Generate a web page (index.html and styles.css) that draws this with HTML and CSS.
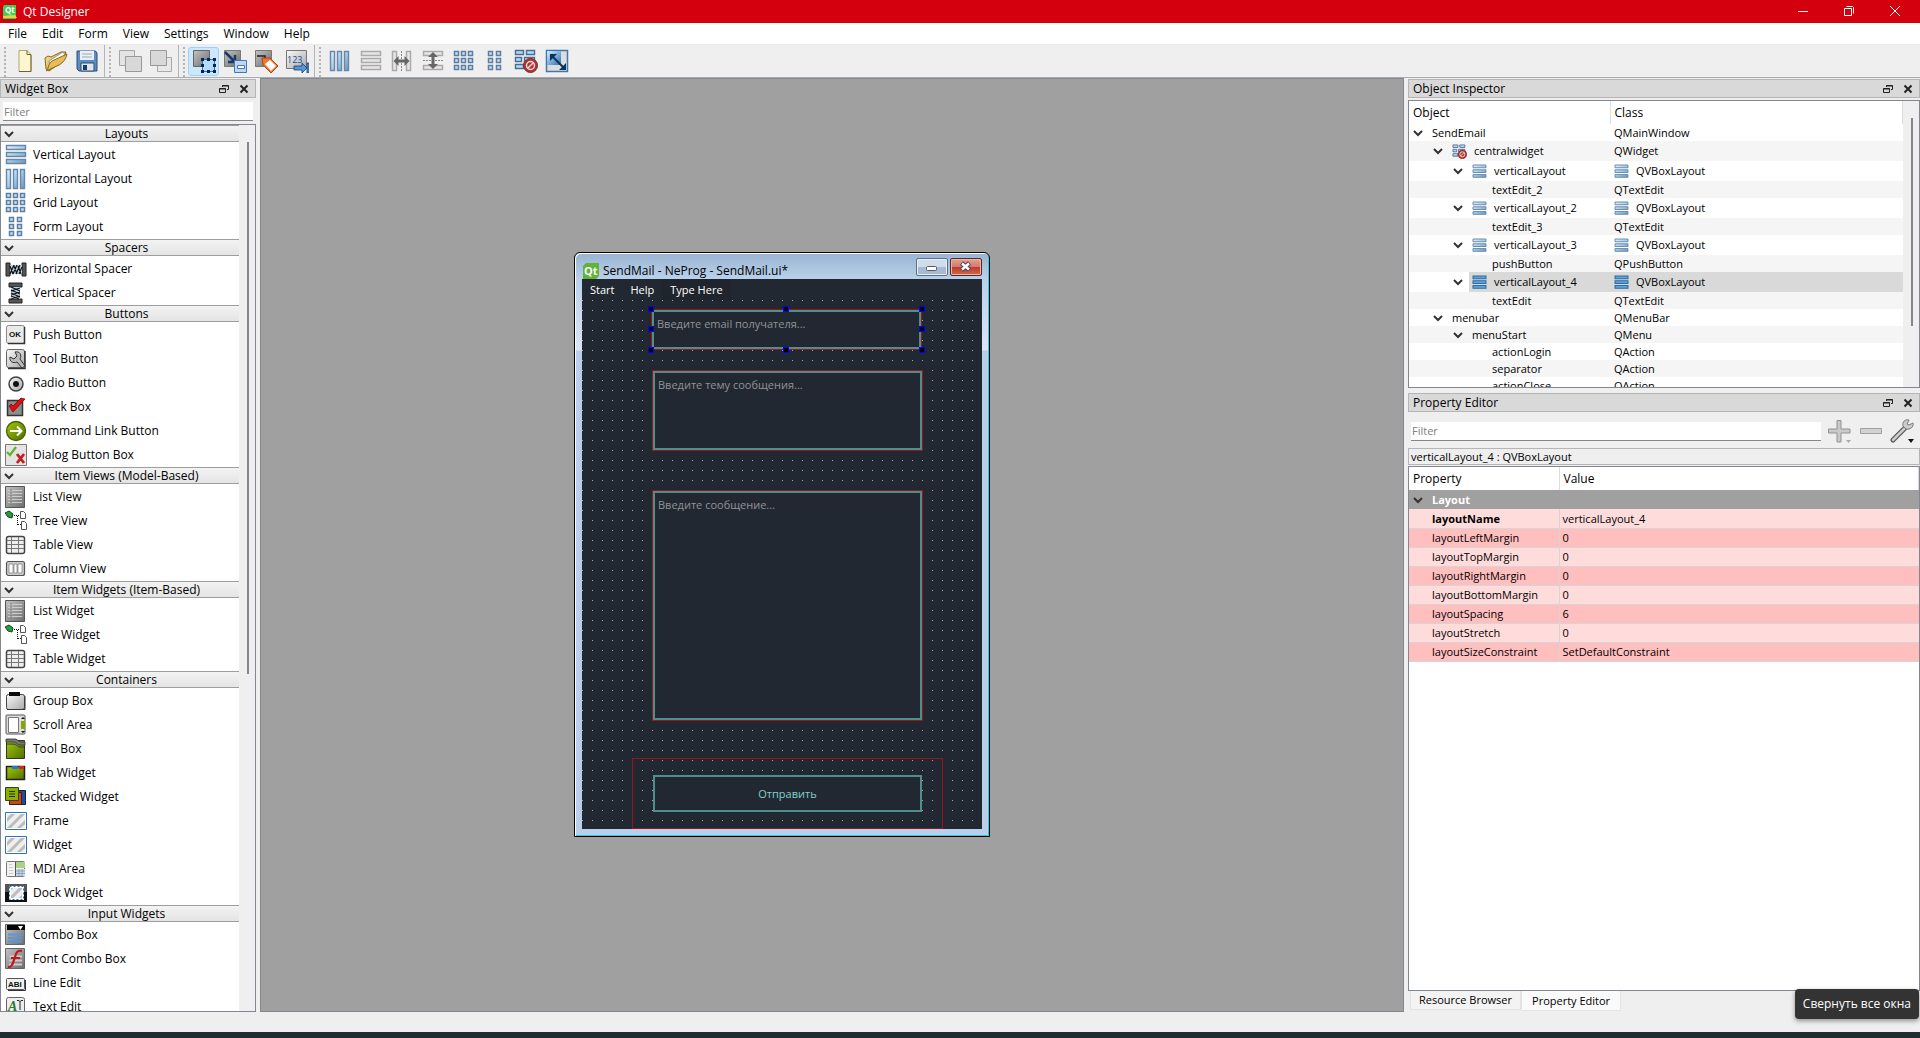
FILE: index.html
```html
<!DOCTYPE html>
<html lang="en">
<head>
<meta charset="utf-8">
<title>Qt Designer</title>
<link rel="stylesheet" href="styles.css">
</head>
<body>
<svg class="sprite" aria-hidden="true">
  <defs>
    <linearGradient id="blue" x1="0" y1="0" x2="1" y2="1"><stop offset="0" stop-color="#dff2ff"/><stop offset=".5" stop-color="#9fcdec"/><stop offset="1" stop-color="#6f96b8"/></linearGradient>
    <linearGradient id="grey" x1="0" y1="0" x2="1" y2="1"><stop offset="0" stop-color="#fafafa"/><stop offset="1" stop-color="#a8a8a8"/></linearGradient>
    <linearGradient id="dark" x1="0" y1="0" x2="1" y2="1"><stop offset="0" stop-color="#c4c4c4"/><stop offset="1" stop-color="#6c6c6c"/></linearGradient>
    <linearGradient id="green" x1="0" y1="0" x2="1" y2="1"><stop offset="0" stop-color="#a5c800"/><stop offset="1" stop-color="#4f6e00"/></linearGradient>
    <linearGradient id="gold" x1="0" y1="0" x2="1" y2="1"><stop offset="0" stop-color="#fbe9a4"/><stop offset="1" stop-color="#c69322"/></linearGradient>
    <linearGradient id="navy" x1="0" y1="0" x2="1" y2="1"><stop offset="0" stop-color="#d6ecff"/><stop offset="1" stop-color="#2c6fb4"/></linearGradient>
    <pattern id="stripes" width="7" height="7" patternUnits="userSpaceOnUse" patternTransform="rotate(45)"><rect width="7" height="7" fill="#efefef"/><rect width="3" height="7" fill="#bcbcbc"/></pattern>
  </defs>
  <symbol id="i-chev" viewBox="0 0 10 8"><path d="M1 2l4 4 4-4" fill="none" stroke="#333" stroke-width="2"/></symbol>
  <symbol id="i-float" viewBox="0 0 10 10"><path d="M3.500 3V1.500h6v4H8M3 2h7M.5 4.500h6v4h-6zM0 5h7" fill="none" stroke="#222"/></symbol>
  <symbol id="i-x" viewBox="0 0 10 10"><path d="M1.500 1.500l7 7M8.500 1.500l-7 7" fill="none" stroke="#222" stroke-width="2"/></symbol>
  <symbol id="i-new" viewBox="0 0 24 24"><path d="M6 1.500h8l4 4v17H6z" fill="#fdf7cf" stroke="#b3a86a"/><path d="M14 1.500v4h4M18 6v16.500H6" fill="none" stroke="#6e6535"/></symbol>
  <symbol id="i-open" viewBox="0 0 24 24"><path d="M1 9l3-2 3 1 10-5 5 0-4 10-13 9-3-2z" fill="url(#gold)" stroke="#8a6a1c"/><path d="M5 12L19 3l2 3L6 18z" fill="#fff" stroke="#777" stroke-width=".7"/><path d="M2 22c3-2 2-8 6-10L23 5c-1 5-4 9-8 11z" fill="#e9bd55" stroke="#8a6a1c"/></symbol>
  <symbol id="i-save" viewBox="0 0 24 24"><path d="M2 2h18.500L22 4v18H4l-2-2V2z" fill="#5b8dc4" stroke="#2b4f7a"/><path d="M5 2h14v9H5z" fill="#e8f1fa"/><path d="M7 5h10M7 8h10" stroke="#9ab"/><path d="M6 14h13v8H6z" fill="#dfe5ea" stroke="#294c70"/><path d="M8 16h4v5H8z" fill="#1d3b5f"/></symbol>
  <symbol id="i-front" viewBox="0 0 24 24"><path d="M1.500 1.500h15v15h-15z" fill="#e3e3e3" stroke="#a5a5a5"/><path d="M7.500 7.500h16v15h-16z" fill="#d8d8d8" stroke="#999"/></symbol>
  <symbol id="i-back" viewBox="0 0 24 24"><path d="M8.500 8.500h14v14h-14z" fill="#e8e8e8" stroke="#aaa"/><path d="M1.500 1.500h16v15h-16z" fill="#d8d8d8" stroke="#999"/></symbol>
  <symbol id="i-wedit" viewBox="0 0 24 24"><path d="M1.500 1.500h16v16h-16z" fill="url(#dark)" stroke="#666"/><path d="M10.500 10.500h12v12h-12z" fill="#b2dcff" stroke="#336fb9"/><path d="M9 9h3v3H9zM15 9h3v3h-3zM21 9h3v3h-3zM9 15h3v3H9zM21 15h3v3h-3zM9 21h3v3H9zM15 21h3v3h-3zM21 21h3v3h-3z" fill="#0d2348"/></symbol>
  <symbol id="i-sig" viewBox="0 0 24 24"><path d="M1.500 1.500h16v16h-16z" fill="url(#dark)" stroke="#777"/><path d="M2 3l9 9M12 6v7H5" fill="none" stroke="#153b66" stroke-width="2.500"/><path d="M11.500 11.500h12v12h-12z" fill="#bcd8f4" stroke="#4478b3"/><path d="M14.500 16.500h7v3h-7z" fill="#fff" stroke="#4478b3"/></symbol>
  <symbol id="i-buddy" viewBox="0 0 24 24"><path d="M1.500 1.500h16v16h-16z" fill="url(#dark)" stroke="#777"/><path d="M3 7h8v5" fill="none" stroke="#222" stroke-width="1.500"/><path d="M8 9h8l8 8-7 7-8-8z" fill="#f0752a" stroke="#b34510"/><path d="M11 15l5-4 6 6-5 5z" fill="#fff"/></symbol>
  <symbol id="i-h" viewBox="0 0 22 22"><path d="M1.500 1.500h4v19h-4zM8.500 1.500h4v19h-4zM15.500 1.500h4v19h-4z" fill="url(#blue)" stroke="#6a86a6" stroke-width="1.400"/></symbol>
  <symbol id="i-v" viewBox="0 0 22 22"><path d="M1.500 1.500h19v4h-19zM1.500 8.500h19v4h-19zM1.500 15.500h19v4h-19z" fill="url(#blue)" stroke="#6a86a6" stroke-width="1.400"/></symbol>
  <symbol id="i-vsel" viewBox="0 0 22 22"><path d="M1.500 1.500h19v4h-19zM1.500 8.500h19v4h-19zM1.500 15.500h19v4h-19z" fill="#56a7de" stroke="#33699c" stroke-width="1.500"/></symbol>
  <symbol id="i-voff" viewBox="0 0 22 22"><path d="M1.500 1.500h19v4h-19zM1.500 8.500h19v4h-19zM1.500 15.500h19v4h-19z" fill="#e6e6e6" stroke="#aaa" stroke-width="1.500"/></symbol>
  <symbol id="i-hs" viewBox="0 0 22 22"><path d="M1.500 1.500h4v19h-4zM15.500 1.500h4v19h-4z" fill="#e6e6e6" stroke="#aaa" stroke-width="1.500"/><path d="M10.500 1v20" stroke="#888" stroke-dasharray="2 1"/><path d="M2.500 11l5-5v3.500h6V6l5 5-5 5v-3.500h-6V16z" fill="#666"/></symbol>
  <symbol id="i-vs" viewBox="0 0 22 22"><path d="M1.500 1.500h19v4h-19zM1.500 15.500h19v4h-19z" fill="#e6e6e6" stroke="#aaa" stroke-width="1.500"/><path d="M1 10.500h20" stroke="#888" stroke-dasharray="2 1"/><path d="M11 2l5 5h-3.500v7H16l-5 5-5-5h3.500V7H6z" fill="#666"/></symbol>
  <symbol id="i-grid" viewBox="0 0 22 22"><path d="M1.500 1.500h4v4h-4zM8.500 1.500h4v4h-4zM15.500 1.500h4v4h-4zM1.500 8.500h4v4h-4zM8.500 8.500h4v4h-4zM15.500 8.500h4v4h-4zM1.500 15.500h4v4h-4zM8.500 15.500h4v4h-4zM15.500 15.500h4v4h-4z" fill="#c3e2f6" stroke="#5e7da0" stroke-width="1.500"/></symbol>
  <symbol id="i-form" viewBox="0 0 22 22"><path d="M4.500 1.500h4v4h-4zM12.500 1.500h4v4h-4zM4.500 8.500h4v4h-4zM12.500 8.500h4v4h-4zM4.500 15.500h4v4h-4zM12.500 15.500h4v4h-4z" fill="#c3e2f6" stroke="#5e7da0" stroke-width="1.500"/></symbol>
  <symbol id="i-break" viewBox="0 0 24 24"><path d="M1.500 1.500h8v4h-8zM12.500 1.500h8v4h-8zM1.500 8.500h6v4h-6zM10.500 8.500h10v4h-10zM1.500 15.500h8v4h-8z" fill="#b5dbf5" stroke="#4b6c92" stroke-width="1.400"/><circle cx="16.500" cy="16.500" r="7" fill="#b92f2f" stroke="#7c2a2a"/><circle cx="16.500" cy="16.500" r="4" fill="#b92f2f" stroke="#ddd" stroke-width="1.500"/><path d="M13.700 19.300l5.600-5.600" stroke="#ddd" stroke-width="1.500"/></symbol>
  <symbol id="i-adjust" viewBox="0 0 24 24"><path d="M1.500 1.500h21v21h-21z" fill="#ddd" stroke="#3a78b5" stroke-width="1.500"/><path d="M2 2h14v14H2z" fill="url(#navy)"/><path d="M7 7l12 12" stroke="#0d3557" stroke-width="2"/><path d="M5 5h7l-7 7zM21 21h-7l7-7z" fill="#0d3557"/></symbol>
  <symbol id="i-hspc" viewBox="0 0 22 22"><path d="M1 5h4v13H1zM17 5h4v13h-4z" fill="#555" stroke="#222"/><path d="M5 7h12v9H5z" fill="#bcd3e4"/><path d="M5 16l4-9M8 16l4-9M11 16l4-9M14 16l3-7M5 8l3 8M9 8l3 8M13 8l3 8" stroke="#111" stroke-width="1.200"/></symbol>
  <symbol id="i-vspc" viewBox="0 0 22 22"><path d="M4 1h13v4H4zM4 17h13v4H4z" fill="#555" stroke="#222"/><path d="M6 5h9v12H6z" fill="#bcd3e4"/><path d="M6 5l9 4M6 8l9 4M6 11l9 4M6 14l8 3M15 6l-9 3M15 10l-9 3M15 14l-9 3" stroke="#111" stroke-width="1.200"/></symbol>
  <symbol id="i-tool" viewBox="0 0 22 22"><rect x="1.500" y="1.500" width="18" height="18" rx="2" fill="url(#grey)" stroke="#666"/><path d="M3 20.500h17V3" fill="none" stroke="#333" stroke-width="1.500"/><path d="M10 4c5-1 7 3 5 7l5 7-3 2-5-6c-4 2-8-1-7-5l4 2 3-3z" fill="#bbb" stroke="#333"/></symbol>
  <symbol id="i-radio" viewBox="0 0 22 22"><circle cx="11" cy="12" r="7" fill="url(#grey)" stroke="#444" stroke-width="1.500"/><circle cx="11" cy="12" r="3" fill="#111"/></symbol>
  <symbol id="i-check" viewBox="0 0 22 22"><path d="M2.500 4.500h15v15h-15z" fill="#8d8d8d" stroke="#333" stroke-width="1.500"/><path d="M4 10l4 6L20 3l-4-1-8 8-2-2z" fill="#d11" stroke="#700" stroke-width=".7"/></symbol>
  <symbol id="i-cmd" viewBox="0 0 22 22"><circle cx="11" cy="11" r="9.500" fill="url(#green)" stroke="#46600a" stroke-width="1.300"/><path d="M5 11h11M12 6.500l4.500 4.500-4.500 4.500" fill="none" stroke="#fff" stroke-width="2"/></symbol>
  <symbol id="i-dlg" viewBox="0 0 22 22"><path d="M.5.5h21v21H.5z" fill="#e4e4e4" stroke="#777"/><path d="M2 8l3 3 6-8" fill="none" stroke="#5eb52c" stroke-width="2.200"/><path d="M12 10l7 9M19 10l-7 9" stroke="#c41e1e" stroke-width="2.800"/></symbol>
  <symbol id="i-list" viewBox="0 0 22 22"><path d="M.5.5h19v21H.5z" fill="url(#dark)" stroke="#555"/><path d="M3 4.500h14M3 7.500h14M3 10.500h14M3 13.500h14M3 16.500h14" stroke="#ccc"/><path d="M6 3v16" stroke="#777" stroke-dasharray="2 1"/></symbol>
  <symbol id="i-tree" viewBox="0 0 22 22"><path d="M0 3l4-2 4 3-1 4-4-1z" fill="#2a9a3c" stroke="#0c4a18"/><path d="M9 5.500h6M12.500 6v9M13 14.500h3" fill="none" stroke="#111" stroke-dasharray="1 1"/><path d="M15.500 1.500h3l2 2v5h-5zM16.500 11.500h3l2 2v6h-5z" fill="#fff" stroke="#555"/></symbol>
  <symbol id="i-table" viewBox="0 0 22 22"><rect x="1.500" y="2.500" width="18" height="17" rx="2" fill="#eee" stroke="#444" stroke-width="1.500"/><path d="M2 6.500h17M2 10.500h17M2 14.500h17M6.500 3v16M13.500 3v16" stroke="#777"/></symbol>
  <symbol id="i-col" viewBox="0 0 22 22"><rect x="1.500" y="3.500" width="18" height="14" rx="2" fill="#ccc" stroke="#555" stroke-width="1.200"/><path d="M4 6h4v9H4zM9 6h3v9H9zM13 6h4v9h-4z" fill="#fff" stroke="#777" stroke-width=".7"/></symbol>
  <symbol id="i-group" viewBox="0 0 22 22"><rect x="1.500" y="4.500" width="18" height="15" rx="2" fill="url(#grey)" stroke="#444"/><path d="M2 19.500h18V6" fill="none" stroke="#333"/><path d="M4 2h11v4H4z" fill="#0a0a0a"/></symbol>
  <symbol id="i-scroll" viewBox="0 0 22 22"><rect x="1" y="1" width="19" height="19" rx="1" fill="#ddd" stroke="#555"/><path d="M3.500 3.500h10v15h-10z" fill="#fff" stroke="#777"/><path d="M16 7h4v8h-4z" fill="#84a800"/><path d="M16 5l2-2 2 2zM16 17l2 2 2-2z" fill="#111"/></symbol>
  <symbol id="i-toolbox" viewBox="0 0 22 22"><path d="M1.500 2.500h18v18h-18z" fill="url(#green)" stroke="#333"/><path d="M1 1h10l4 3h5v3h-6l-4-3H1zM1 6h9l4 3h6" fill="#777" stroke="#333" stroke-width=".8"/></symbol>
  <symbol id="i-tabw" viewBox="0 0 22 22"><path d="M1.500 4.500h18v13h-18z" fill="url(#green)" stroke="#222" stroke-width="1.500"/><path d="M7 4h6v3H7z" fill="#2677cc"/><path d="M14 4h5v3h-5z" fill="#d22"/></symbol>
  <symbol id="i-stack" viewBox="0 0 22 22"><path d="M10.500 4.500h10v14h-10z" fill="#1c4da3" stroke="#123"/><path d="M4.500 6.500h12v12h-12z" fill="#c64a14" stroke="#511"/><path d="M.5 1.500h13v13H.5z" fill="#8bb000" stroke="#341"/><path d="M4 5.500h6M4 8h6M4 10.500h6" stroke="#231"/></symbol>
  <symbol id="i-frame" viewBox="0 0 22 22"><path d="M.5 2.500h21v17H.5z" fill="#fff" stroke="#2c73be"/><path d="M2 4h18v14H2z" fill="url(#stripes)"/></symbol>
  <symbol id="i-mdi" viewBox="0 0 22 22"><rect x="1.500" y="3.500" width="18" height="15" rx="1" fill="#f2f2f2" stroke="#777"/><path d="M11 4h9v6h-9z" fill="#a9d382"/><path d="M11 11h9v7h-9z" fill="#c9daf0"/><path d="M4 6.500h3M4 9.500h4M4 12.500h4M4 15.500h4" stroke="#ccc"/><path d="M11 13h9M11 15.500h9M14 11v7M17 11v7" stroke="#8ea5bd"/><path d="M10.500 4v14" stroke="#555"/></symbol>
  <symbol id="i-dock" viewBox="0 0 22 22"><path d="M0 2h22v18H0z" fill="#555"/><path d="M0 10h22v10H0z" fill="#111"/><path d="M5 5h13v12H5z" fill="url(#stripes)" stroke="#fff" stroke-width="2"/><path d="M4.500 4.500h14v13h-14z" fill="none" stroke="#2c73be" stroke-dasharray="2 2"/></symbol>
  <symbol id="i-combo" viewBox="0 0 22 22"><path d="M.5.500h19v20H.5z" fill="url(#dark)" stroke="#666"/><path d="M2 1h18v5H2z" fill="#050505"/><path d="M13 2h5l-2.500 4z" fill="#fff"/><path d="M3 10.500h14M3 14h14M3 17.500h14" stroke="#5b96d8" stroke-width="2"/></symbol>
  <symbol id="i-fcombo" viewBox="0 0 22 22"><path d="M.5.500h19v20H.5z" fill="url(#dark)" stroke="#666"/><path d="M4 8.500h13M4 12.500h13M4 16.500h13" stroke="#ccc" stroke-width="2"/><path d="M3 19c4 1 5-4 7-10 1-5 3-7 7-6M6 10h9" fill="none" stroke="#c01818" stroke-width="2.200"/></symbol>
  <symbol id="i-plus" viewBox="0 0 24 24"><path d="M9 1.500h4V10h9v4h-9v9H9v-9H.5v-4H9z" fill="#c9c9c9" stroke="#909090"/><path d="M18 21h5l-2.500 3z" fill="#aaa"/></symbol>
  <symbol id="i-minus" viewBox="0 0 24 24"><path d="M1.500 9.500h21v5h-21z" fill="#d2d2d2" stroke="#a0a0a0"/></symbol>
  <symbol id="i-wrench" viewBox="0 0 24 24"><path d="M3 21L15 9" stroke="#555" stroke-width="5" stroke-linecap="round"/><path d="M3 21L15 9" stroke="#ccc" stroke-width="2.500" stroke-linecap="round"/><path d="M13 7c-1-4 2-7 6-6l-2 4 2 1 4-2c1 4-3 7-7 6z" fill="#ccc" stroke="#777"/><path d="M18 20h6l-3 4z" fill="#111"/></symbol>
</svg>

<div class="app">
  <header class="titlebar">
    <svg class="app-icon" viewBox="0 0 16 16" aria-hidden="true"><path d="M2 1h12v14H1V3z" fill="#41cd52"/><text x="3" y="9" class="ico-qt">Qt</text><path d="M1 12l12-1 2 3H1z" fill="#e8d640"/></svg>
    <h1 class="title">Qt Designer</h1>
    <div class="win-controls">
      <button class="win-btn" aria-label="Minimize"><svg viewBox="0 0 10 10"><path d="M0 5.500h10"/></svg></button>
      <button class="win-btn" aria-label="Restore"><svg viewBox="0 0 10 10"><path d="M.5 2.500h7v7h-7zM2.500.5h6l1 1v6"/></svg></button>
      <button class="win-btn" aria-label="Close"><svg viewBox="0 0 10 10"><path d="M0 0l10 10M10 0L0 10"/></svg></button>
    </div>
  </header>

  <nav class="menubar">
    <button>File</button><button>Edit</button><button>Form</button><button>View</button><button>Settings</button><button>Window</button><button>Help</button>
  </nav>

  <div class="toolbars">
    <div class="toolbar">
      <button aria-label="New"><svg><use href="#i-new"/></svg></button>
      <button aria-label="Open"><svg><use href="#i-open"/></svg></button>
      <button aria-label="Save"><svg><use href="#i-save"/></svg></button>
    </div>
    <div class="toolbar">
      <button aria-label="Bring to front"><svg><use href="#i-front"/></svg></button>
      <button aria-label="Send to back"><svg><use href="#i-back"/></svg></button>
    </div>
    <div class="toolbar">
      <button class="on" aria-label="Edit widgets"><svg><use href="#i-wedit"/></svg></button>
      <button aria-label="Edit signals"><svg><use href="#i-sig"/></svg></button>
      <button aria-label="Edit buddies"><svg><use href="#i-buddy"/></svg></button>
      <button aria-label="Edit tab order"><svg viewBox="0 0 24 24"><path d="M1.500 1.500h20v18h-20z" fill="url(#grey)" stroke="#777"/><text x="2" y="14" class="ico-num">123</text><path d="M9 17h8v-3l5 5-5 5v-3H9zM22 14h2v10h-2z" fill="#5b95d6" stroke="#15406f" stroke-width=".8"/></svg></button>
    </div>
    <div class="toolbar">
      <button aria-label="Lay out horizontally"><svg class="sm"><use href="#i-h"/></svg></button>
      <button aria-label="Lay out vertically"><svg class="sm"><use href="#i-voff"/></svg></button>
      <button aria-label="Horizontal splitter"><svg class="sm"><use href="#i-hs"/></svg></button>
      <button aria-label="Vertical splitter"><svg class="sm"><use href="#i-vs"/></svg></button>
      <button aria-label="Grid"><svg class="sm"><use href="#i-grid"/></svg></button>
      <button aria-label="Form"><svg class="sm"><use href="#i-form"/></svg></button>
      <button aria-label="Break layout"><svg><use href="#i-break"/></svg></button>
      <button aria-label="Adjust size"><svg><use href="#i-adjust"/></svg></button>
    </div>
  </div>

  <main class="main">
    <section class="dock widget-box">
      <div class="dock-title"><h2>Widget Box</h2><button aria-label="Float"><svg><use href="#i-float"/></svg></button><button aria-label="Close"><svg><use href="#i-x"/></svg></button></div>
      <input class="filter" type="text" placeholder="Filter" aria-label="Filter widgets">
      <div class="box">
        <div class="groups">
          <button class="group"><svg><use href="#i-chev"/></svg>Layouts</button>
          <ul>
            <li><svg><use href="#i-v"/></svg>Vertical Layout</li>
            <li><svg><use href="#i-h"/></svg>Horizontal Layout</li>
            <li><svg><use href="#i-grid"/></svg>Grid Layout</li>
            <li><svg><use href="#i-form"/></svg>Form Layout</li>
          </ul>
          <button class="group"><svg><use href="#i-chev"/></svg>Spacers</button>
          <ul>
            <li><svg><use href="#i-hspc"/></svg>Horizontal Spacer</li>
            <li><svg><use href="#i-vspc"/></svg>Vertical Spacer</li>
          </ul>
          <button class="group"><svg><use href="#i-chev"/></svg>Buttons</button>
          <ul>
            <li><svg viewBox="0 0 22 22"><rect x="1.500" y="1.500" width="18" height="18" rx="2" fill="#eaeaea" stroke="#888"/><path d="M3 19.500h16.500V3" fill="none" stroke="#333" stroke-width="1.500"/><text x="4" y="13" class="ico-ok">OK</text></svg>Push Button</li>
            <li><svg><use href="#i-tool"/></svg>Tool Button</li>
            <li><svg><use href="#i-radio"/></svg>Radio Button</li>
            <li><svg><use href="#i-check"/></svg>Check Box</li>
            <li><svg><use href="#i-cmd"/></svg>Command Link Button</li>
            <li><svg><use href="#i-dlg"/></svg>Dialog Button Box</li>
          </ul>
          <button class="group"><svg><use href="#i-chev"/></svg>Item Views (Model-Based)</button>
          <ul>
            <li><svg><use href="#i-list"/></svg>List View</li>
            <li><svg><use href="#i-tree"/></svg>Tree View</li>
            <li><svg><use href="#i-table"/></svg>Table View</li>
            <li><svg><use href="#i-col"/></svg>Column View</li>
          </ul>
          <button class="group"><svg><use href="#i-chev"/></svg>Item Widgets (Item-Based)</button>
          <ul>
            <li><svg><use href="#i-list"/></svg>List Widget</li>
            <li><svg><use href="#i-tree"/></svg>Tree Widget</li>
            <li><svg><use href="#i-table"/></svg>Table Widget</li>
          </ul>
          <button class="group"><svg><use href="#i-chev"/></svg>Containers</button>
          <ul>
            <li><svg><use href="#i-group"/></svg>Group Box</li>
            <li><svg><use href="#i-scroll"/></svg>Scroll Area</li>
            <li><svg><use href="#i-toolbox"/></svg>Tool Box</li>
            <li><svg><use href="#i-tabw"/></svg>Tab Widget</li>
            <li><svg><use href="#i-stack"/></svg>Stacked Widget</li>
            <li><svg><use href="#i-frame"/></svg>Frame</li>
            <li><svg><use href="#i-frame"/></svg>Widget</li>
            <li><svg><use href="#i-mdi"/></svg>MDI Area</li>
            <li><svg><use href="#i-dock"/></svg>Dock Widget</li>
          </ul>
          <button class="group"><svg><use href="#i-chev"/></svg>Input Widgets</button>
          <ul>
            <li><svg><use href="#i-combo"/></svg>Combo Box</li>
            <li><svg><use href="#i-fcombo"/></svg>Font Combo Box</li>
            <li><svg viewBox="0 0 22 22"><rect x="1.500" y="6.500" width="18" height="11" rx="1" fill="#eee" stroke="#555"/><path d="M3 18.500h17.500V8" fill="none" stroke="#333"/><text x="3" y="15" class="ico-ok">ABI</text></svg>Line Edit</li>
            <li><svg viewBox="0 0 22 22"><rect x="1.500" y="1.500" width="18" height="18" rx="2" fill="#ededed" stroke="#666"/><text x="3" y="15" class="ico-a">A</text><path d="M12 4.500h2l1 1 1-1h2M15 5v9" fill="none" stroke="#222"/></svg>Text Edit</li>
          </ul>
        </div>
        <div class="scroll"><div class="thumb thumb-widgets"></div></div>
      </div>
    </section>

    <section class="workspace" aria-label="Workspace">
      <div class="form-window">
        <div class="form-title">
          <svg class="form-icon" viewBox="0 0 16 16" aria-hidden="true"><path d="M3 0h13v13l-3 3H0V3z" fill="#5fb336"/><text x="1" y="12" class="ico-qt2">Qt</text></svg>
          <h2>SendMail - NeProg - SendMail.ui*</h2>
          <div class="form-controls">
            <button aria-label="Minimize form"><svg viewBox="0 0 30 16"><rect x="9.500" y="7.500" width="10" height="4" rx="1" fill="#fff" stroke="#555b66"/></svg></button>
            <button class="close" aria-label="Close form"><svg viewBox="0 0 30 16"><path d="M10.500 4l8 7M18.500 4l-8 7" stroke="#534050" stroke-width="4.500"/><path d="M11 4.500l7 6M18 4.500l-7 6" stroke="#fff" stroke-width="2.500"/></svg></button>
          </div>
        </div>
        <div class="form-client">
          <div class="form-menu"><button>Start</button><button>Help</button><button class="type-here">Type Here</button></div>
          <div class="form-canvas">
            <div class="lay lay-mail">
              <textarea placeholder="Введите email получателя..." aria-label="Email"></textarea>
              <i class="h nw"></i><i class="h n"></i><i class="h ne"></i><i class="h w"></i><i class="h e"></i><i class="h sw"></i><i class="h s"></i><i class="h se"></i>
            </div>
            <div class="lay lay-subject"><textarea placeholder="Введите тему сообщения..." aria-label="Subject"></textarea></div>
            <div class="lay lay-body"><textarea placeholder="Введите сообщение..." aria-label="Message"></textarea></div>
            <div class="lay lay-send"><button>Отправить</button></div>
          </div>
        </div>
      </div>
    </section>

    <div class="side">
      <section class="dock">
        <div class="dock-title"><h2>Object Inspector</h2><button aria-label="Float"><svg><use href="#i-float"/></svg></button><button aria-label="Close"><svg><use href="#i-x"/></svg></button></div>
        <div class="box inspector">
          <table class="tree">
            <colgroup><col class="c-object"><col></colgroup>
            <thead><tr><th>Object</th><th>Class</th></tr></thead>
            <tbody>
              <tr><td><span class="cell d0"><svg class="chev"><use href="#i-chev"/></svg>SendEmail</span></td><td>QMainWindow</td></tr>
              <tr class="tall"><td><span class="cell d1"><svg class="chev"><use href="#i-chev"/></svg><svg class="ic"><use href="#i-break"/></svg>centralwidget</span></td><td>QWidget</td></tr>
              <tr class="tall"><td><span class="cell d2"><svg class="chev"><use href="#i-chev"/></svg><svg class="ic"><use href="#i-v"/></svg>verticalLayout</span></td><td><span class="cell"><svg class="ic"><use href="#i-v"/></svg>QVBoxLayout</span></td></tr>
              <tr><td><span class="cell d3">textEdit_2</span></td><td>QTextEdit</td></tr>
              <tr class="tall"><td><span class="cell d2"><svg class="chev"><use href="#i-chev"/></svg><svg class="ic"><use href="#i-v"/></svg>verticalLayout_2</span></td><td><span class="cell"><svg class="ic"><use href="#i-v"/></svg>QVBoxLayout</span></td></tr>
              <tr><td><span class="cell d3">textEdit_3</span></td><td>QTextEdit</td></tr>
              <tr class="tall"><td><span class="cell d2"><svg class="chev"><use href="#i-chev"/></svg><svg class="ic"><use href="#i-v"/></svg>verticalLayout_3</span></td><td><span class="cell"><svg class="ic"><use href="#i-v"/></svg>QVBoxLayout</span></td></tr>
              <tr><td><span class="cell d3">pushButton</span></td><td>QPushButton</td></tr>
              <tr class="tall sel"><td><span class="cell d2"><svg class="chev"><use href="#i-chev"/></svg><svg class="ic"><use href="#i-vsel"/></svg>verticalLayout_4</span></td><td><span class="cell"><svg class="ic"><use href="#i-vsel"/></svg>QVBoxLayout</span></td></tr>
              <tr><td><span class="cell d3">textEdit</span></td><td>QTextEdit</td></tr>
              <tr><td><span class="cell d1"><svg class="chev"><use href="#i-chev"/></svg>menubar</span></td><td>QMenuBar</td></tr>
              <tr><td><span class="cell d2"><svg class="chev"><use href="#i-chev"/></svg>menuStart</span></td><td>QMenu</td></tr>
              <tr><td><span class="cell d3">actionLogin</span></td><td>QAction</td></tr>
              <tr><td><span class="cell d3">separator</span></td><td>QAction</td></tr>
              <tr><td><span class="cell d3">actionClose</span></td><td>QAction</td></tr>
            </tbody>
          </table>
          <div class="scroll"><div class="thumb thumb-objects"></div></div>
        </div>
      </section>

      <section class="dock properties">
        <div class="dock-title"><h2>Property Editor</h2><button aria-label="Float"><svg><use href="#i-float"/></svg></button><button aria-label="Close"><svg><use href="#i-x"/></svg></button></div>
        <div class="prop-tools">
          <input class="filter" type="text" placeholder="Filter" aria-label="Filter properties">
          <button aria-label="Add property"><svg><use href="#i-plus"/></svg></button>
          <button aria-label="Remove property"><svg><use href="#i-minus"/></svg></button>
          <button aria-label="Configure"><svg><use href="#i-wrench"/></svg></button>
        </div>
        <p class="object-name">verticalLayout_4 : QVBoxLayout</p>
        <div class="box">
          <table class="props">
            <colgroup><col class="c-prop"><col></colgroup>
            <thead><tr><th>Property</th><th>Value</th></tr></thead>
            <tbody>
              <tr class="section"><td colspan="2"><span class="cell d0"><svg class="chev"><use href="#i-chev"/></svg>Layout</span></td></tr>
              <tr class="changed"><td>layoutName</td><td>verticalLayout_4</td></tr>
              <tr><td>layoutLeftMargin</td><td>0</td></tr>
              <tr><td>layoutTopMargin</td><td>0</td></tr>
              <tr><td>layoutRightMargin</td><td>0</td></tr>
              <tr><td>layoutBottomMargin</td><td>0</td></tr>
              <tr><td>layoutSpacing</td><td>6</td></tr>
              <tr><td>layoutStretch</td><td>0</td></tr>
              <tr><td>layoutSizeConstraint</td><td>SetDefaultConstraint</td></tr>
            </tbody>
          </table>
        </div>
        <div class="tabs"><button>Resource Browser</button><button class="active">Property Editor</button></div>
      </section>
    </div>
  </main>

  <footer class="statusbar"></footer>
  <div class="taskbar"></div>
  <div class="tooltip" role="tooltip">Свернуть все окна</div>
</div>
</body>
</html>
```

FILE: styles.css
```css
* { box-sizing: border-box; }

body {
  margin: 0;
  font: 12px/16px "Open Sans", "Noto Sans", sans-serif;
  color: #000;
  background: #efefef;
}

button, input, textarea { font: inherit; color: inherit; margin: 0; border-radius: 0; outline: 0; }
button { padding: 0; border: 0; background: none; }
h1, h2, p, ul { margin: 0; padding: 0; font-size: 12px; font-weight: 400; }
ul { list-style: none; }
svg { display: block; flex: none; }
.sprite { position: absolute; width: 0; height: 0; }

.ico-num { font: 9px "Open Sans", sans-serif; fill: #15508f; }
.ico-ok { font: bold 8px "Liberation Sans", sans-serif; fill: #111; }
.ico-a { font: italic bold 14px "Liberation Serif", serif; fill: #2b7a33; }
.ico-qt { font: bold 8px "Open Sans", sans-serif; fill: #fff; }
.ico-qt2 { font: bold 11px "Open Sans", sans-serif; fill: #fff; }

.app {
  display: grid;
  grid-template-rows: 23px 22px 33px minmax(0, 1fr) 20px 6px;
  height: 100vh;
  overflow: hidden;
  position: relative;
}

/* Title bar */
.titlebar { display: flex; align-items: center; background: #d4000d; color: #fff; padding: 0 2px; }
.app-icon { width: 16px; height: 16px; }
.title { margin-left: 5px; flex: 1; }
.win-controls { display: flex; align-self: stretch; }
.win-btn { width: 46px; padding-bottom: 2px; display: flex; align-items: center; justify-content: center; }
.win-btn svg { width: 10px; height: 10px; fill: none; stroke: #fff; overflow: visible; }

/* Menu bar and toolbars */
.menubar { display: flex; gap: 15px; padding: 0 8px; background: #fff; border-bottom: 1px solid #ebebeb; }
.toolbars { display: flex; background: #efefef; border-bottom: 1px solid #a8acb0; }
.toolbar { display: flex; align-items: center; padding: 0 2px 0 9px; border-right: 1px solid #b4b4b4; background: radial-gradient(circle at 1px 1px, #b4b4b4 1px, transparent 1px) 4px 2px / 2px 4px; background-repeat: no-repeat repeat; }
.toolbar:last-child { border-right: 0; }
.toolbar button { width: 31px; height: 29px; display: flex; align-items: center; justify-content: center; }
.toolbar .on { background: #cce8ff; border: 1px solid #99d1ff; border-radius: 3px; }
.toolbar svg { width: 24px; height: 24px; }
.toolbar .sm { width: 22px; height: 22px; }

/* Main area */
.main { display: grid; grid-template: minmax(0, 1fr) / 256px minmax(0, 1fr) 512px; gap: 4px; }
.dock { display: flex; flex-direction: column; min-height: 0; }
.dock-title { display: flex; align-items: center; gap: 10px; height: 19px; padding: 1px 6px 0 4px; background: #d9d9d9; border: 1px solid #b5b5b5; flex: none; }
.dock-title h2 { flex: 1; }
.dock-title svg { width: 10px; height: 10px; }
.filter { width: 100%; height: 19px; padding: 0 1px; background: #fff; border: 0; border-bottom: 1px solid #868686; font-size: 11px; }
.filter::placeholder { color: #808080; opacity: 1; }
.box { display: flex; flex: 1; min-height: 0; overflow: hidden; background: #fff; border: 1px solid #828790; }
.scroll { width: 16px; background: #efefef; flex: none; padding-left: 8px; }
.thumb { width: 2px; background: #868686; }

.widget-box { padding-top: 1px; }
.widget-box .filter { width: auto; margin: 4px 3px 3px; flex: none; }
.groups { flex: 1; min-width: 0; }
.group { display: grid; grid-template-columns: 16px 1fr; align-items: center; width: 100%; height: 17px; margin-bottom: 1px; padding-right: 3px; background: linear-gradient(#f3f3f3, #e4e4e4); border: solid #9d9d9d; border-width: 1px 0; }
.group svg { width: 10px; height: 8px; margin-left: 3px; }
.groups li { display: flex; align-items: center; gap: 6px; height: 24px; padding-left: 4px; }
.groups li svg { width: 22px; height: 22px; }
.thumb-widgets { margin-top: 17px; height: 60%; }

.workspace { position: relative; overflow: hidden; background: #a0a0a0; border: 1px solid #828790; }

/* Form being edited: a free-floating sub-window */
.form-window { position: absolute; left: 313px; top: 173px; width: 416px; padding: 0 7px 7px; border: 1px solid #000; border-radius: 6px 6px 0 0; background: linear-gradient(#99b4d1, #b9d1ea 26px, #dbe7f5 97px, #b9cfeb 98px); box-shadow: inset 1px 1px #fff, inset -1px -1px #35c6e6; }
.form-title { display: flex; align-items: center; height: 26px; gap: 4px; padding: 5px 0 0 1px; }
.form-icon { width: 16px; height: 16px; margin-top: 4px; }
.form-title h2 { flex: 1; margin-top: 5px; }
.form-controls { display: flex; gap: 2px; align-self: flex-start; }
.form-controls button { width: 32px; height: 18px; border: 1px solid #5f6f87; border-radius: 2px; background: linear-gradient(#cfdceb 50%, #a6bbd3 50%); box-shadow: inset 0 0 0 1px #e6eef6; }
.form-controls .close { border-color: #5a2626; background: linear-gradient(#e0a397, #d4776a 50%, #bb3a28 50%, #cf6a4c); box-shadow: inset 0 0 0 1px #eab5a9; }
.form-controls svg { width: 30px; height: 16px; fill: none; }
.form-client { background: #222831; color: #fff; font-size: 11px; }
.form-menu { display: flex; gap: 4px; height: 21px; }
.form-menu button { padding: 0 4px 0 8px; }
.form-menu .type-here { background: #20242c; padding: 0 8px; }
.form-canvas { position: relative; height: 529px; background: conic-gradient(from 270deg at 1px 1px, #a3a6aa 90deg, transparent 0) 0 0 / 10px 10px; }
.lay { position: absolute; display: flex; border: 1px solid #98151c; }
.lay textarea, .lay button { flex: 1; width: 100%; border: 2px solid #4e8f8d; background: #222831; resize: none; overflow: hidden; }
.lay textarea { display: block; padding: 4px 3px; color: #a0a0a0; }
.lay textarea::placeholder { color: #909398; opacity: 1; }
.lay button { color: #7fd1cf; }
.lay-mail { left: 69px; top: 9px; width: 271px; height: 41px; }
.lay-subject { left: 70px; top: 70px; width: 271px; height: 81px; }
.lay-body { left: 70px; top: 190px; width: 271px; height: 231px; }
.lay-send { left: 50px; top: 458px; width: 311px; height: 71px; padding: 16px 20px; }
.h { position: absolute; width: 6px; height: 6px; background: #000; border: 1px solid #00f; }
.nw, .n, .ne { top: -4px; }
.w, .e { top: 16px; }
.sw, .s, .se { bottom: -4px; }
.nw, .w, .sw { left: -4px; }
.n, .s { left: 131px; }
.ne, .e, .se { right: -4px; }

/* Right-hand docks */
.side { display: grid; grid-template-rows: minmax(0, 1fr) minmax(0, 2fr); gap: 5px; padding-top: 1px; }
.inspector { margin-top: 2px; }
table { border-collapse: collapse; table-layout: fixed; width: 100%; align-self: flex-start; }
th { height: 23px; padding: 0 4px; text-align: left; font-weight: 400; border-right: 1px solid #dcdcdc; }
td { padding: 0; white-space: nowrap; font-size: 11px; }
.cell { display: flex; align-items: center; }
.chev { width: 10px; height: 8px; margin-right: 9px; }
.ic { width: 15px; height: 15px; margin-right: 7px; }
.d0 { padding-left: 4px; }
.d1 { padding-left: 24px; }
.d2 { padding-left: 44px; }
.d3 { padding-left: 83px; }
.c-object { width: 201px; }
.tree { flex: 1; width: auto; }
.tree td { height: 17px; }
.tree .tall td { height: 20px; }
.tree td:last-child { padding-left: 4px; }
.tree tbody tr:nth-child(even) { background: #f5f5f5; }
.tree .sel td { background: #d9d9d9; }
.tree .sel td:first-child { background: linear-gradient(to right, #fff 60px, #d9d9d9 60px); }
.thumb-objects { margin-top: 17px; height: 208px; }

.prop-tools { display: flex; align-items: center; gap: 7px; height: 36px; padding: 2px 6px 0 3px; flex: none; }
.prop-tools .filter { flex: 1; }
.prop-tools button { width: 24px; height: 24px; }
.prop-tools svg { width: 24px; height: 24px; }
.object-name { height: 17px; padding: 0 2px; margin-bottom: 1px; border: 1px solid #b5b5b5; line-height: 15px; font-size: 11px; flex: none; }
.c-prop { width: 150px; }
.props td { height: 19px; border-bottom: 1px solid #d5d5d5; }
.props td:first-child { padding-left: 23px; border-right: 1px solid #d5d5d5; }
.props td:last-child { padding-left: 3px; }
.props tbody tr:nth-child(even) { background: #ffdcdc; }
.props tbody tr:nth-child(odd) { background: #ffbfbf; }
.props .section td:first-child { padding: 0; border: 0; background: #a0a0a0; color: #fff; font-weight: 700; }
.props .changed td:first-child { font-weight: 700; }
.tabs { display: flex; align-items: flex-start; height: 21px; padding-left: 2px; flex: none; font-size: 11px; }
.tabs button { height: 19px; padding: 0 8px; background: #f3f3f3; border: 1px solid #e3e3e3; border-top: 0; }
.tabs .active { height: 20px; padding: 0 10px; background: #fafafa; }

.taskbar { background: #1f2d30; }
.tooltip { position: absolute; right: 1px; bottom: 19px; padding: 7px 8px; background: #333; color: #fff; border-radius: 4px; box-shadow: 0 2px 5px rgba(0, 0, 0, .4); }
```
